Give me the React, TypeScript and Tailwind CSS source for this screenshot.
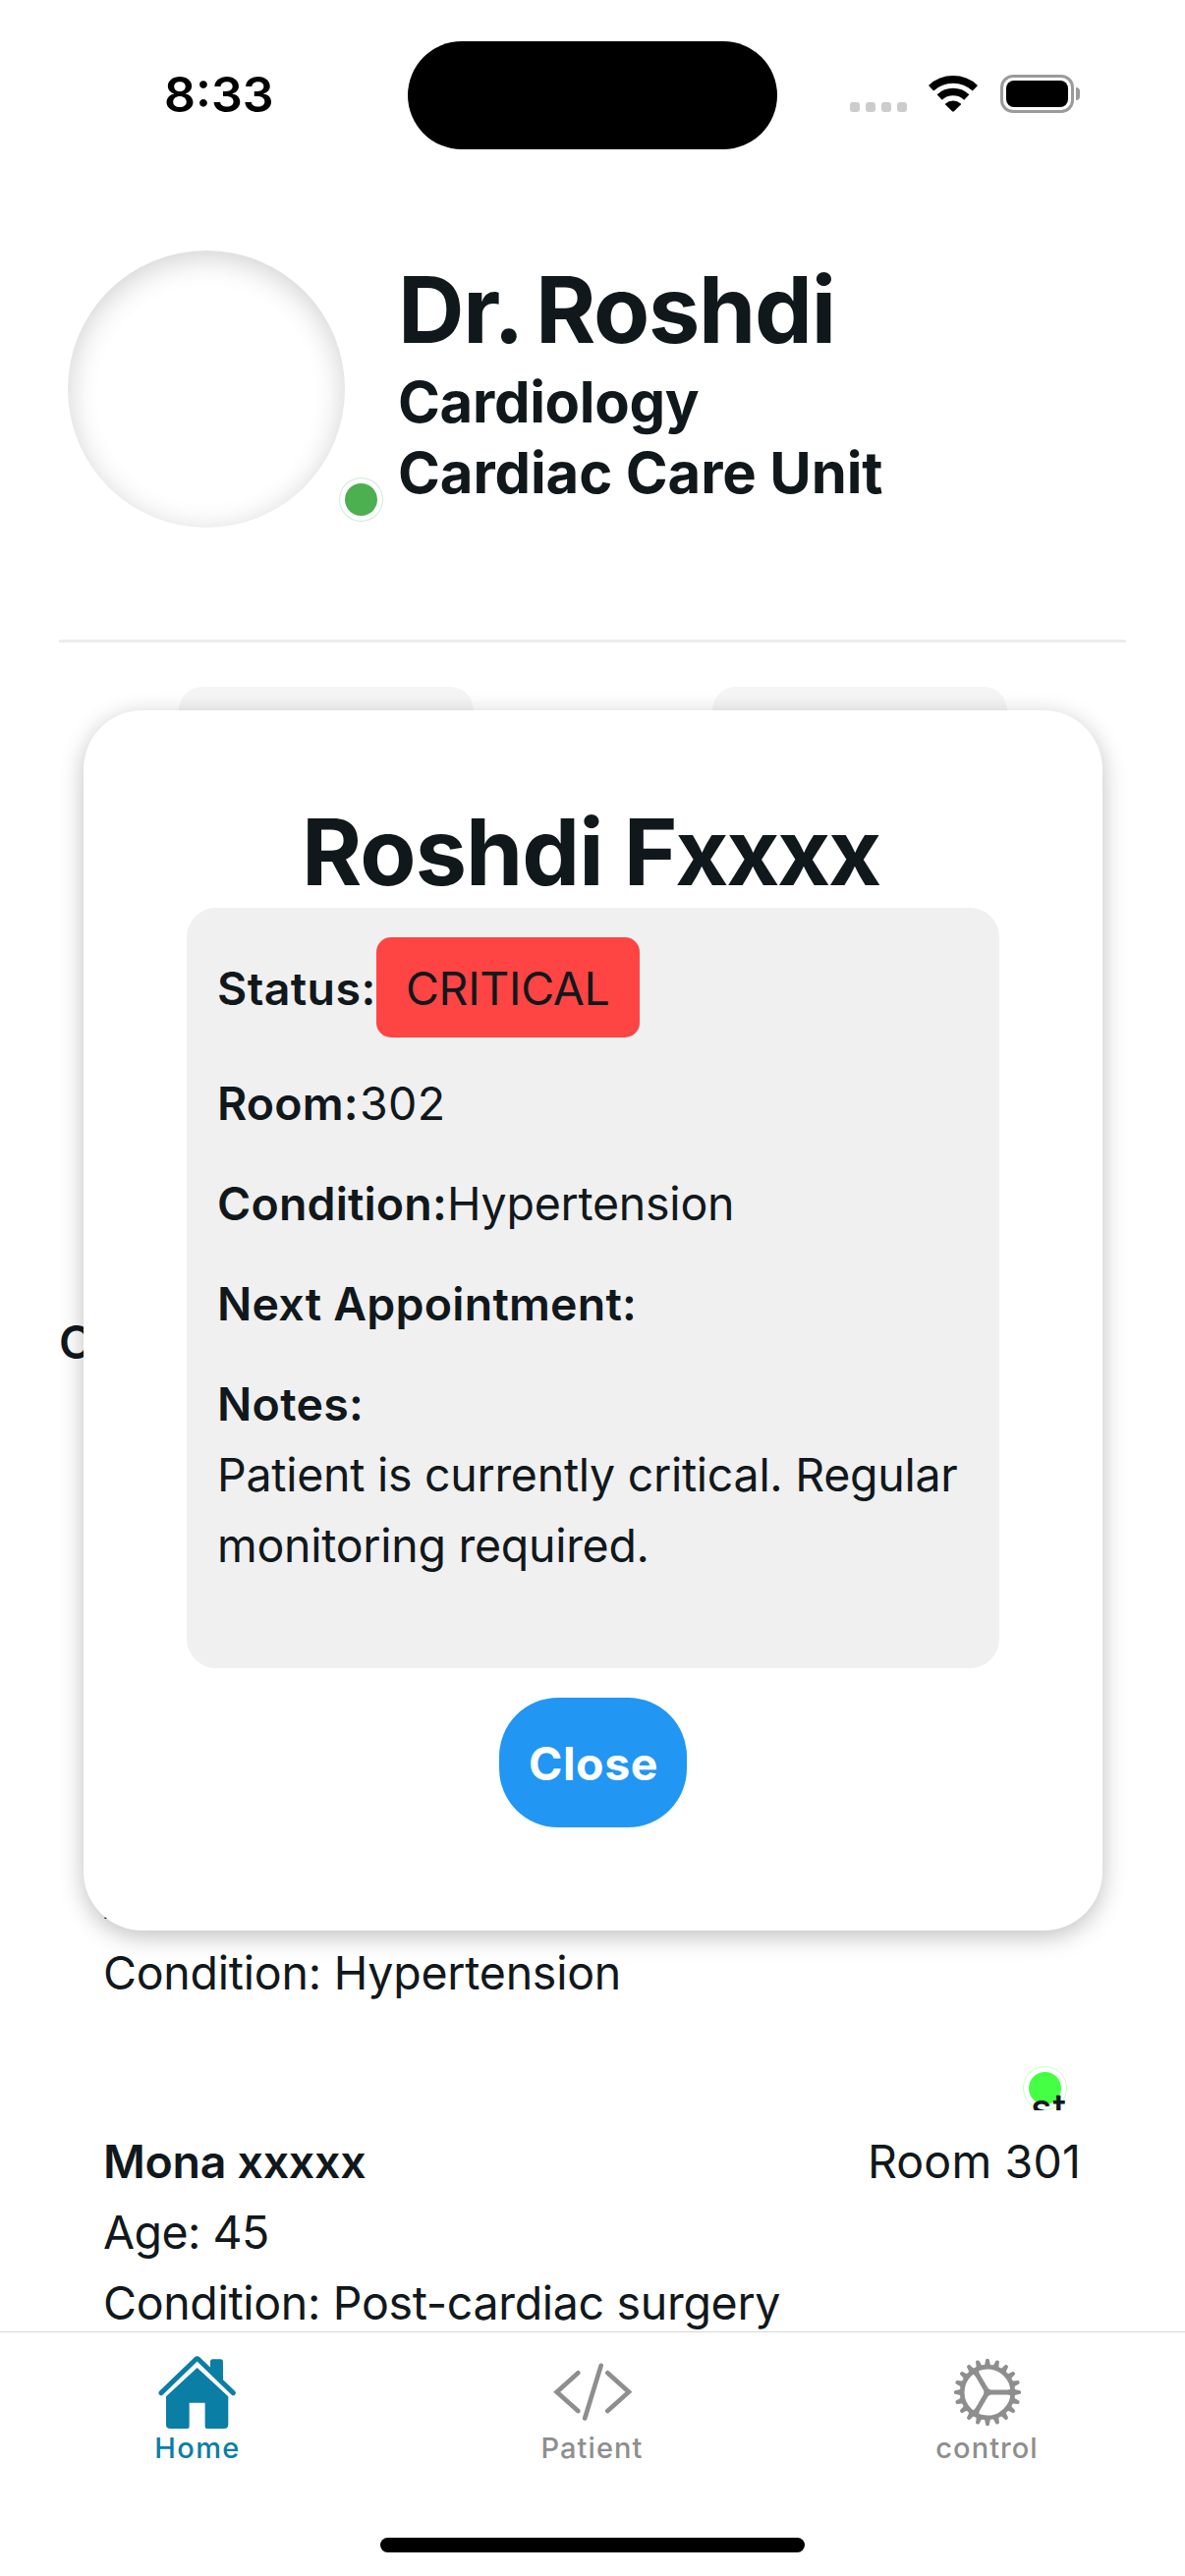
import type { ReactNode } from 'react';

function WifiIcon() {
  return (
    <svg className="h-[37px] w-[50px]" viewBox="0 0 50 37" fill="none">
      <path d="M2.6 12.7A32.8 32.8 0 0 1 47.4 12.7" stroke="#000" strokeWidth="7.6" />
      <path d="M11.2 21.9A20.2 20.2 0 0 1 38.8 21.9" stroke="#000" strokeWidth="7.6" />
      <path d="M17.2 28.6A11.6 11.6 0 0 1 32.8 28.6Q33.2 29 32.8 29.5L26 36.3Q25 37.2 24 36.3L17.2 29.5Q16.8 29 17.2 28.6Z" fill="#000" />
    </svg>
  );
}

function BatteryIcon() {
  return (
    <div className="flex items-center">
      <div className="h-[39px] w-[75px] rounded-[13px] border-[3px] border-[#9b9b9b] p-[3px]">
        <div className="h-full w-full rounded-[8px] bg-black" />
      </div>
      <div className="ml-[2px] h-[13px] w-[4px] rounded-r-full bg-[#9b9b9b]" />
    </div>
  );
}

function StatusBar() {
  return (
    <div className="flex h-[255px] shrink-0 items-start">
      <div className="mt-[66px] w-[415px] pl-[167px] text-[50px] leading-[60px] font-semibold text-black">8:33</div>
      <div className="mt-[42px] h-[110px] w-[376px] rounded-full bg-black" />
      <div className="mt-[104px] ml-[74px] flex gap-[6px]">
        {[0, 1, 2, 3].map((i) => (
          <div key={i} className="h-[10px] w-[10px] rounded-[3px] bg-[#cccccc]" />
        ))}
      </div>
      <div className="mt-[77px] ml-[22px]">
        <WifiIcon />
      </div>
      <div className="mt-[76px] ml-[23px]">
        <BatteryIcon />
      </div>
    </div>
  );
}

function DoctorHeader() {
  return (
    <div className="mx-[60px] flex h-[399px] shrink-0 items-start border-b-[3px] border-[#ededed] pl-[9px]">
      <div className="relative h-[282px] w-[282px] shrink-0 rounded-full bg-white shadow-[inset_0_6px_30px_rgba(0,0,0,0.19)]">
        <div className="absolute top-[231px] left-[276px] flex h-[45px] w-[45px] items-center justify-center rounded-full border border-[#4caf50]/25 bg-white">
          <div className="h-[33px] w-[33px] rounded-full bg-[#4caf50]" />
        </div>
      </div>
      <div className="ml-[54px] pt-[12px]">
        <h1 className="text-[93.5px] leading-[96px] font-bold tracking-[-1.3px] [word-spacing:-5px]">Dr. Roshdi</h1>
        <p className="mt-[10px] text-[58px] leading-[72px] font-bold tracking-[-0.3px]">Cardiology</p>
        <p className="text-[58px] leading-[72px] font-bold tracking-[-0.1px]">Cardiac Care Unit</p>
      </div>
    </div>
  );
}

function PatientRow({ name, room, age, condition, status }: { name?: string; room?: string; age: string; condition: ReactNode; status?: string }) {
  return (
    <div className="h-[336px] pt-[59px] pr-[106px] pl-[105px]">
      <div className="mr-[14px] flex h-[45px] justify-end">
        {status && (
          <div className="relative flex h-[45px] w-[45px] items-center justify-center overflow-hidden">
            <div className="flex h-[45px] w-[45px] items-center justify-center rounded-full border border-[#44ff44]/30">
              <div className="h-[33px] w-[33px] rounded-full bg-[#44ff44]" />
            </div>
            <span className="absolute top-[7px] left-[8px] text-[40px] leading-[72px] font-medium tracking-[1px]">{status}</span>
          </div>
        )}
      </div>
      <div className="mt-[16px] flex h-[72px] justify-between">
        <span className="font-semibold tracking-[-0.3px]">{name}</span>
        <span className="tracking-[0.16px]">{room}</span>
      </div>
      <p className="tracking-[-0.54px]">{age}</p>
      <p>{condition}</p>
    </div>
  );
}

function DetailsModal() {
  return (
    <div className="absolute top-[723px] left-[85px] flex h-[1242px] w-[1037px] flex-col items-center rounded-[60px] bg-white pt-[96px] shadow-[0_6px_24px_rgba(0,0,0,0.25)]">
      <h2 className="pr-[5px] text-[93.5px] leading-[96px] font-bold">
        <span className="tracking-[-1px]">Roshdi </span>
        <span className="tracking-[-2.3px]">Fxxxx</span>
      </h2>
      <div className="mt-[9px] flex h-[774px] w-[827px] flex-col rounded-[30px] bg-[#f0f0f0] pt-[30px] pl-[31px]">
        <div className="flex h-[102px] items-start">
          <span className="w-[162px] pt-[16px] font-semibold tracking-[0.4px]">Status:</span>
          <span className="h-[102px] w-[268px] rounded-[15px] bg-[#ff4444] pt-[16px] pl-[30px] tracking-[-0.35px]">CRITICAL</span>
        </div>
        <div className="mt-[31px] flex">
          <span className="w-[145px] font-semibold tracking-[0.1px]">Room:</span>
          <span className="tracking-[0.3px]">302</span>
        </div>
        <div className="mt-[30px] flex">
          <span className="w-[234px] font-semibold tracking-[0.15px]">Condition:</span>
          <span className="tracking-[-0.25px]">Hypertension</span>
        </div>
        <p className="mt-[30px] font-semibold tracking-[0.22px]">Next Appointment:</p>
        <p className="mt-[30px] font-semibold tracking-[0.3px]">Notes:</p>
        <p className="tracking-[-0.28px]">
          Patient is currently critical. Regular
          <br />
          monitoring required.
        </p>
      </div>
      <button className="mt-[30px] h-[132px] w-[191px] rounded-[60px] bg-[#2196f3] pt-px pl-px font-bold tracking-[0.5px] text-white">Close</button>
    </div>
  );
}

function HomeIcon() {
  return (
    <svg className="h-[74.3px] w-[79.3px]" viewBox="184 113 238 223" fill="#0a7ea4">
      <path d="M193 226L299 123.500Q303 120 307 123.500L413 226" fill="none" stroke="#0a7ea4" strokeWidth="15" strokeLinecap="round" strokeLinejoin="round" />
      <path d="M343 152V131Q343 123 351 123H374Q382 123 382 131V192Z" />
      <path d="M303 149L398 237V322Q398 335 385 335H333Q327 335 327 329V256H279V329Q279 335 273 335H221Q208 335 208 322V237Z" />
    </svg>
  );
}

function CodeIcon() {
  return (
    <svg className="h-[59.3px] w-[80.700px]" viewBox="188 136 242 178" fill="none" stroke="#8e8e8e" strokeWidth="14" strokeLinecap="round">
      <path d="M264 167L199 225L264 283" strokeLinejoin="miter" />
      <path d="M334 144.500L284.500 305.500" />
      <path d="M354 167L419 225L354 283" />
    </svg>
  );
}

function GearIcon() {
  return (
    <svg className="h-[70px] w-[70px]" viewBox="-105 -105 210 210" fill="#8e8e8e">
      <circle r="77.500" fill="none" stroke="#8e8e8e" strokeWidth="14" />
      {Array.from({ length: 20 }, (_, i) => (
        <path key={i} d="M80 -11L86 -8L99 -5.500Q102 -5 102 -2V2Q102 5 99 5.500L86 8L80 11Z" transform={`rotate(${i * 18})`} />
      ))}
      {[0, 120, 240].map((a) => (
        <path key={a} d="M0 -11L10 -7.500H60Q70 -7.500 75 -14V14Q70 7.500 60 7.500H10L0 11Z" transform={`rotate(${a})`} />
      ))}
    </svg>
  );
}

function Tab({ icon, label, className }: { icon: ReactNode; label: string; className: string }) {
  return (
    <div className="flex flex-1 flex-col items-center pt-[21px]">
      <div className="flex h-[80px] items-center">{icon}</div>
      <span className={`text-[29px] leading-[34px] font-medium ${className}`}>{label}</span>
    </div>
  );
}

export default function App() {
  return (
    <div className="relative flex h-[2622px] w-[1206px] flex-col overflow-hidden bg-white font-['Inter',sans-serif] text-[46.5px] leading-[72px] text-[#11181c]">
      <StatusBar />
      <DoctorHeader />
      <div className="mt-[45px] flex h-[631px] shrink-0 gap-[243px] pl-[182px]">
        <div className="h-[540px] w-[300px] rounded-[24px] bg-[#f5f5f5]" />
        <div className="h-[540px] w-[300px] rounded-[24px] bg-[#f5f5f5]" />
      </div>
      <h3 className="h-[378px] shrink-0 pl-[60px] font-semibold">C</h3>
      <div className="h-[665px] shrink-0 overflow-hidden">
        <PatientRow age="A" condition={<span className="tracking-[-0.24px]">Condition: Hypertension</span>} />
        <PatientRow name="Mona xxxxx" room="Room 301" age="Age: 45" status="st" condition={<span className="tracking-[-0.32px]">Condition: Post-cardiac surgery</span>} />
      </div>
      <div className="relative h-[249px] shrink-0 border-t border-[#d8d8d8] bg-white">
        <div className="flex">
          <Tab icon={<HomeIcon />} label="Home" className="tracking-[1.38px] text-[#0a7ea4]" />
          <Tab icon={<CodeIcon />} label="Patient" className="pr-px tracking-[1.07px] text-[#8e8e8e]" />
          <Tab icon={<GearIcon />} label="control" className="pr-px tracking-[1.04px] text-[#8e8e8e]" />
        </div>
        <div className="mx-auto mt-[74px] h-[15px] w-[432px] rounded-full bg-black" />
      </div>
      <DetailsModal />
    </div>
  );
}
